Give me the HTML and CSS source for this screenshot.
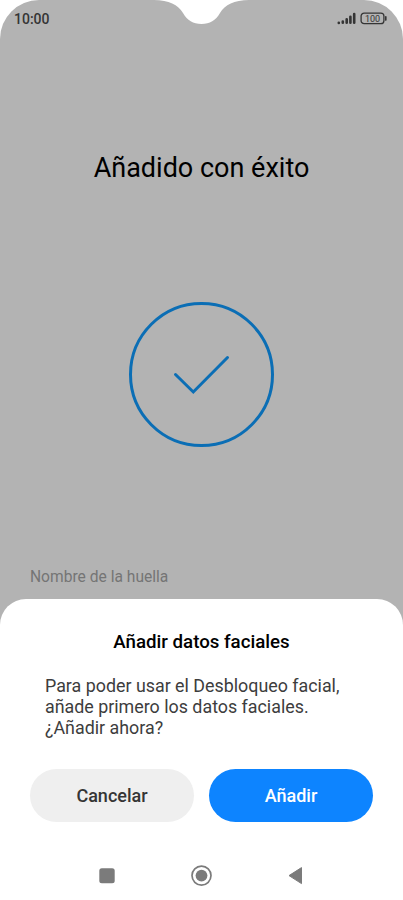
FILE: index.html
```html
<!DOCTYPE html>
<html lang="es">

<head>
  <meta charset="UTF-8">
  <meta name="viewport" content="width=device-width, initial-scale=1.0">
  <title>Añadir datos faciales</title>
  <link rel="stylesheet" href="styles.css">
</head>

<body>
  <div class="phone">
    <svg class="notch" width="125" height="30" viewBox="0 0 125 30">
      <path d="M14 0C29 .4 38 4.500 43 13C47.500 20.500 53 24 61.500 24C70 24 75.500 20.500 80 13C85 4.500 94 .4 109 0Z" fill="#fff" />
    </svg>

    <header class="status-bar">
      <span class="time">10:00</span>
      <div class="status-icons">
        <svg width="19" height="13" viewBox="0 0 19 13" fill="none" stroke="#353535" stroke-width="2.600" stroke-linecap="round">
          <path d="M1.800 10.800v.1M5.800 9.500v1.300M9.700 7.300v3.500M13.400 4.700v6.100M17.200 2v8.800" />
        </svg>
        <svg width="27" height="13" viewBox="0 0 27 13">
          <rect x="1.100" y="1.100" width="22.800" height="10.600" rx="3" fill="none" stroke="#353535" stroke-width="1.300" />
          <path d="M25.800 4.700v3.400" stroke="#353535" stroke-width="1.600" stroke-linecap="round" />
          <text class="battery-text" x="12.500" y="9.600" text-anchor="middle">100</text>
        </svg>
      </div>
    </header>

    <main class="content">
      <h1>Añadido con éxito</h1>
      <svg class="success" width="145" height="146" viewBox="0 0 145 146" fill="none" stroke="#0b6eb5" stroke-width="3">
        <circle cx="72.500" cy="72.500" r="71" />
        <path d="M46.500 72.500L64.300 90L98.500 55.500" stroke-linecap="round" />
      </svg>
      <p class="label">Nombre de la huella</p>
    </main>

    <section class="sheet">
      <h2>Añadir datos faciales</h2>
      <p class="message">Para poder usar el Desbloqueo facial, añade primero los datos faciales. ¿Añadir ahora?</p>
      <div class="buttons">
        <button class="cancelBtn">Cancelar</button>
        <button class="addBtn">Añadir</button>
      </div>
      <nav class="nav-bar">
        <svg width="22" height="22" viewBox="0 0 22 22">
          <rect x="3.300" y="3.200" width="15.400" height="15" rx="2.500" fill="#7b7b7b" />
        </svg>
        <svg width="22" height="22" viewBox="0 0 22 22">
          <circle cx="10.500" cy="10.600" r="9.500" fill="none" stroke="#7b7b7b" stroke-width="1.700" />
          <circle cx="10.500" cy="10.600" r="5.900" fill="#7b7b7b" />
        </svg>
        <svg width="22" height="22" viewBox="0 0 22 22">
          <path d="M4 10.600L16.500 2.600V18.600Z" fill="#7b7b7b" stroke="#7b7b7b" stroke-width="1" stroke-linejoin="round" />
        </svg>
      </nav>
    </section>
  </div>
</body>

</html>
```

FILE: styles.css
```css
/* Base styles */
* {
  box-sizing: border-box;
}

body {
  font-family: Roboto, sans-serif;
  margin: 0;
  background-color: #fff;
}

h1,
h2,
p {
  margin: 0;
}

svg {
  display: block;
}

.phone {
  position: relative;
  display: flex;
  flex-direction: column;
  width: 403px;
  height: 900px;
  overflow: hidden;
  background-color: #b3b3b3;
  border-radius: 39px 39px 0 0;
}

/* Camera cutout */
.notch {
  position: absolute;
  top: 0;
  left: 140px;
}

/* Status bar */
.status-bar {
  display: flex;
  justify-content: space-between;
  align-items: center;
  height: 37px;
  padding: 0 16px 0 14px;
}

.time {
  font-size: 14px;
  font-weight: 500;
  color: #353535;
}

.status-icons {
  display: flex;
  align-items: center;
  gap: 4px;
}

.battery-text {
  font-size: 9px;
  font-weight: 400;
  fill: #353535;
}

/* Fingerprint screen */
.content {
  flex: 1;
  display: flex;
  flex-direction: column;
  align-items: center;
  padding-top: 112px;
}

h1 {
  font-size: 27px;
  font-weight: 400;
  line-height: 38px;
  color: #000;
}

.success {
  margin-top: 115px;
}

.label {
  align-self: flex-start;
  margin: 119px 0 0 30px;
  font-size: 15.600px;
  line-height: 20px;
  color: #757575;
}

/* Bottom dialog */
.sheet {
  height: 301px;
  padding: 31px 30px 0;
  background-color: #fff;
  border-radius: 26px 26px 0 0;
}

h2 {
  font-size: 18.700px;
  font-weight: 500;
  line-height: 24px;
  text-align: center;
  color: #000;
}

.message {
  margin-top: 21px;
  padding: 0 15px;
  font-size: 17.850px;
  line-height: 21.200px;
  color: #3d3d3d;
}

.buttons {
  display: flex;
  gap: 15px;
  margin-top: 30px;
}

button {
  flex: 1;
  height: 53px;
  padding: 0;
  border: none;
  border-radius: 27px;
  font-family: inherit;
  font-size: 18px;
  font-weight: 500;
  cursor: pointer;
}

.cancelBtn {
  background-color: #efefef;
  color: #353535;
}

.addBtn {
  background-color: #0d84ff;
  color: #fff;
}

/* Navigation bar */
.nav-bar {
  display: flex;
  justify-content: space-between;
  padding: 43px 66px 0;
}
```
